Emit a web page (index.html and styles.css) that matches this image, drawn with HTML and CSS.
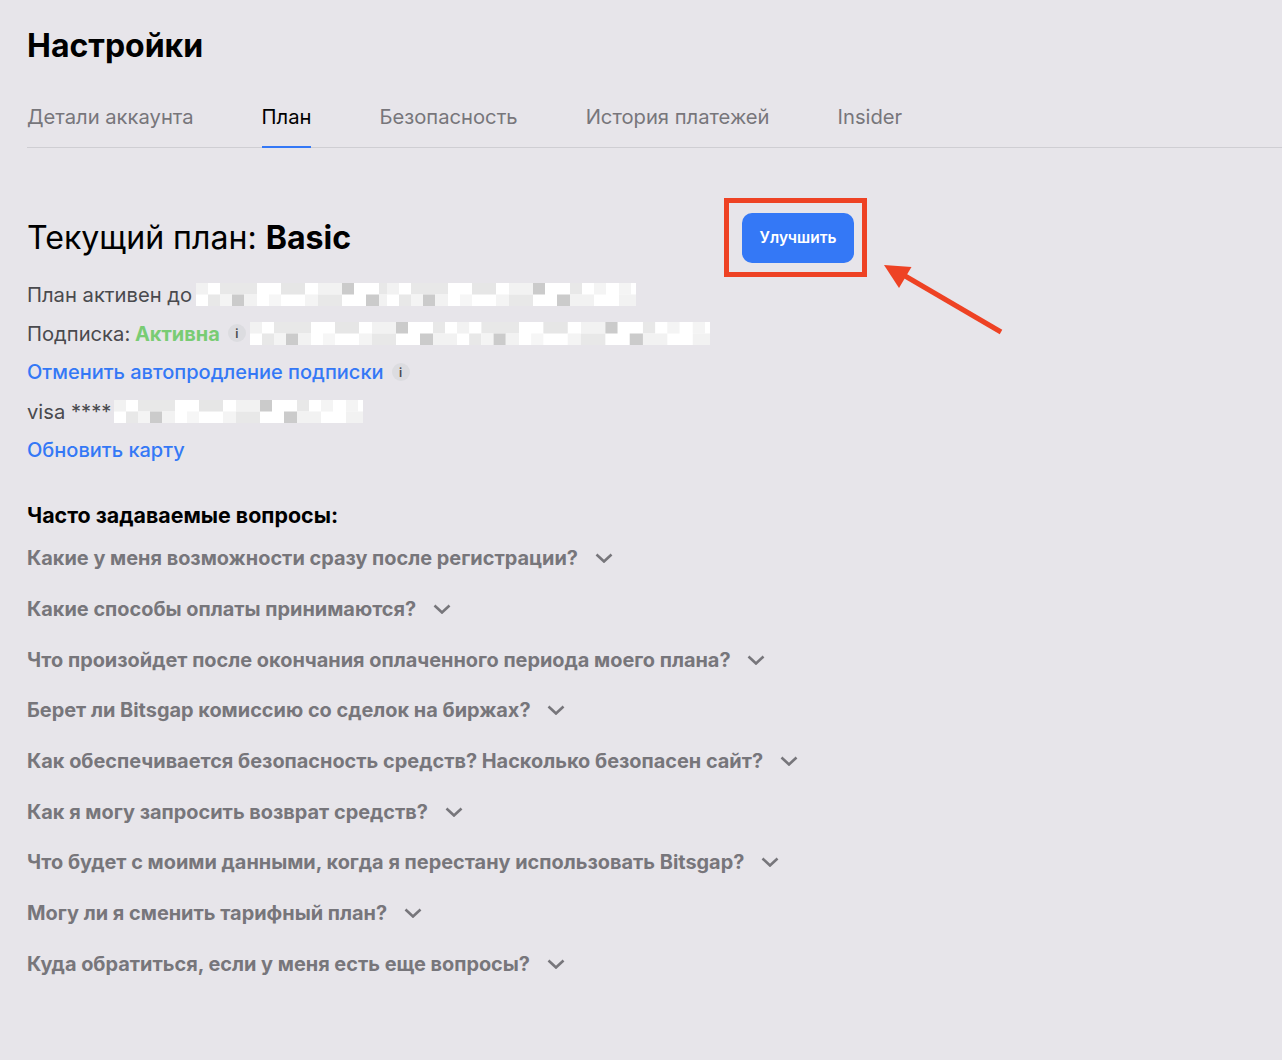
FILE: index.html
```html
<!DOCTYPE html>
<html lang="ru">

<head>
    <meta charset="UTF-8">
    <meta name="viewport" content="width=device-width, initial-scale=1.0">
    <title>Настройки</title>
    <link rel="stylesheet" href="styles.css">
</head>

<body>
    <svg class="defs" width="0" height="0" aria-hidden="true">
        <symbol id="chevron" viewBox="0 0 18 10">
            <path d="M1.5 1.5 9 8.5l7.5-7" fill="none" stroke="currentColor" stroke-width="2.6" />
        </symbol>
        <!-- blurred-out text, one tile of mosaic -->
        <symbol id="pixels" viewBox="0 0 249 23" preserveAspectRatio="none">
            <rect width="249" height="23" fill="#ffffff" />
            <rect x="0" y="0" width="12" height="11.500" fill="#f2f2f2" />
            <rect x="24" y="0" width="37" height="11.500" fill="#e8e8e8" />
            <rect x="85" y="0" width="24" height="11.500" fill="#e6e6e6" />
            <rect x="122" y="0" width="24" height="11.500" fill="#f2f2f2" />
            <rect x="146" y="0" width="12" height="11.500" fill="#cbcbcb" />
            <rect x="183" y="0" width="12" height="11.500" fill="#e8e8e8" />
            <rect x="207" y="0" width="12" height="11.500" fill="#f4f4f4" />
            <rect x="232" y="0" width="12" height="11.500" fill="#f4f4f4" />
            <rect x="12" y="11.500" width="12" height="11.500" fill="#e8e8e8" />
            <rect x="24" y="11.500" width="12" height="11.500" fill="#f4f4f4" />
            <rect x="36" y="11.500" width="12" height="11.500" fill="#cbcbcb" />
            <rect x="48" y="11.500" width="13" height="11.500" fill="#f2f2f2" />
            <rect x="73" y="11.500" width="12" height="11.500" fill="#f6f6f6" />
            <rect x="109" y="11.500" width="13" height="11.500" fill="#f4f4f4" />
            <rect x="122" y="11.500" width="24" height="11.500" fill="#e8e8e8" />
            <rect x="170" y="11.500" width="13" height="11.500" fill="#cbcbcb" />
            <rect x="183" y="11.500" width="24" height="11.500" fill="#f2f2f2" />
            <rect x="232" y="11.500" width="17" height="11.500" fill="#f2f2f2" />
        </symbol>
    </svg>

    <div class="page">
        <h1 class="page-title">Настройки</h1>

        <nav class="tabs">
            <a class="tab">Детали аккаунта</a>
            <a class="tab tab-active">План</a>
            <a class="tab">Безопасность</a>
            <a class="tab">История платежей</a>
            <a class="tab">Insider</a>
        </nav>

        <section class="plan">
            <div class="plan-head">
                <h2 class="plan-title">Текущий план: <b>Basic</b></h2>
                <button class="upgrade-button">Улучшить</button>
            </div>

            <div class="plan-row">
                <span class="plan-text">План активен до</span>
                <svg class="redacted redacted-date">
                    <use href="#pixels" width="249" height="23" />
                    <use href="#pixels" x="191" width="249" height="23" />
                </svg>
            </div>
            <div class="plan-row">
                <span class="plan-text">Подписка: <b class="status-active">Активна</b></span>
                <span class="info-dot">i</span>
                <svg class="redacted redacted-sub">
                    <use href="#pixels" width="249" height="23" />
                    <use href="#pixels" x="207" width="253" height="23" />
                </svg>
            </div>
            <div class="plan-row">
                <a class="link">Отменить автопродление подписки</a>
                <span class="info-dot">i</span>
            </div>
            <div class="plan-row plan-row-tight">
                <span class="plan-text">visa ****</span>
                <svg class="redacted redacted-card">
                    <use href="#pixels" width="249" height="23" />
                </svg>
            </div>
            <div class="plan-row">
                <a class="link">Обновить карту</a>
            </div>
        </section>

        <section class="faq">
            <h3 class="faq-title">Часто задаваемые вопросы:</h3>
            <div class="faq-item">Какие у меня возможности сразу после регистрации? <svg class="chevron"><use href="#chevron" /></svg></div>
            <div class="faq-item">Какие способы оплаты принимаются? <svg class="chevron"><use href="#chevron" /></svg></div>
            <div class="faq-item">Что произойдет после окончания оплаченного периода моего плана? <svg class="chevron"><use href="#chevron" /></svg></div>
            <div class="faq-item">Берет ли Bitsgap комиссию со сделок на биржах? <svg class="chevron"><use href="#chevron" /></svg></div>
            <div class="faq-item">Как обеспечивается безопасность средств? Насколько безопасен сайт? <svg class="chevron"><use href="#chevron" /></svg></div>
            <div class="faq-item">Как я могу запросить возврат средств? <svg class="chevron"><use href="#chevron" /></svg></div>
            <div class="faq-item">Что будет с моими данными, когда я перестану использовать Bitsgap? <svg class="chevron"><use href="#chevron" /></svg></div>
            <div class="faq-item">Могу ли я сменить тарифный план? <svg class="chevron"><use href="#chevron" /></svg></div>
            <div class="faq-item">Куда обратиться, если у меня есть еще вопросы? <svg class="chevron"><use href="#chevron" /></svg></div>
        </section>
    </div>

    <!-- red annotation drawn over the page -->
    <svg class="annotation" width="1282" height="1060" aria-hidden="true">
        <rect x="726.5" y="200.5" width="138" height="74" fill="none" stroke="#ee4224" stroke-width="5" />
        <path d="M1001 332 900 273" fill="none" stroke="#ee4224" stroke-width="5" />
        <path d="M884 265 911.500 267 899 288Z" fill="#ee4224" />
    </svg>
</body>

</html>
```

FILE: styles.css
```css
body {
    margin: 0;
    background-color: #e7e5ea;
    font-family: Inter, "Noto Sans", sans-serif;
    color: #4a4a4e;
}

.defs {
    display: block;
}

.page {
    padding: 26px 0 0 27px;
}

.page-title {
    margin: 0;
    font-size: 32px;
    line-height: 40px;
    font-weight: 700;
    color: #000000;
}

.tabs {
    display: flex;
    gap: 68px;
    margin-top: 33px;
    border-bottom: 1px solid #cfced3;
}

.tab {
    padding-bottom: 13px;
    margin-bottom: -1px;
    font-size: 20.2px;
    line-height: 36px;
    color: #77767b;
}

.tab-active {
    color: #000000;
    border-bottom: 2px solid #3478f6;
    padding-bottom: 11px;
}

.plan {
    margin-top: 65px;
}

.plan-head {
    display: flex;
    align-items: center;
    justify-content: space-between;
    width: 827px;
    margin-bottom: 12px;
}

.plan-title {
    margin: 0;
    font-size: 32.1px;
    line-height: 50px;
    font-weight: 400;
    color: #000000;
}

.upgrade-button {
    width: 112px;
    height: 50px;
    padding-bottom: 3px;
    border: none;
    border-radius: 10px;
    background-color: #3478f6;
    color: #ffffff;
    font-family: inherit;
    font-size: 15.5px;
    font-weight: 600;
}

.plan-row {
    display: flex;
    align-items: center;
    gap: 4px;
    height: 38.9px;
    font-size: 20px;
}

.plan-text {
    font-size: 20.2px;
}

.status-active {
    margin-left: -1px;
    color: #79cc74;
    font-size: 20px;
    font-weight: 700;
}

.link {
    color: #3478f6;
    font-weight: 500;
}

.info-dot {
    display: flex;
    align-items: center;
    justify-content: center;
    width: 18px;
    height: 18px;
    margin-left: 4px;
    border-radius: 50%;
    background-color: #dcdce0;
    font-size: 12px;
    font-weight: 600;
    color: #4a4a4e;
}

.redacted {
    display: block;
    height: 23px;
}

.redacted-date {
    width: 440px;
}

.redacted-sub {
    width: 460px;
}

.redacted-card {
    width: 249px;
}

.plan-row-tight {
    gap: 3px;
}

.faq {
    margin-top: 26.5px;
}

.faq-title {
    margin: 0 0 4.4px;
    font-size: 21.4px;
    line-height: 38px;
    font-weight: 700;
    color: #000000;
}

.faq-item {
    height: 50.7px;
    font-size: 19.9px;
    line-height: 40px;
    font-weight: 700;
    color: #77767b;
}

.chevron {
    width: 18px;
    height: 10px;
    margin-left: 12px;
    color: #77767b;
    vertical-align: 2px;
}

.annotation {
    position: absolute;
    left: 0;
    top: 0;
    pointer-events: none;
}
```
